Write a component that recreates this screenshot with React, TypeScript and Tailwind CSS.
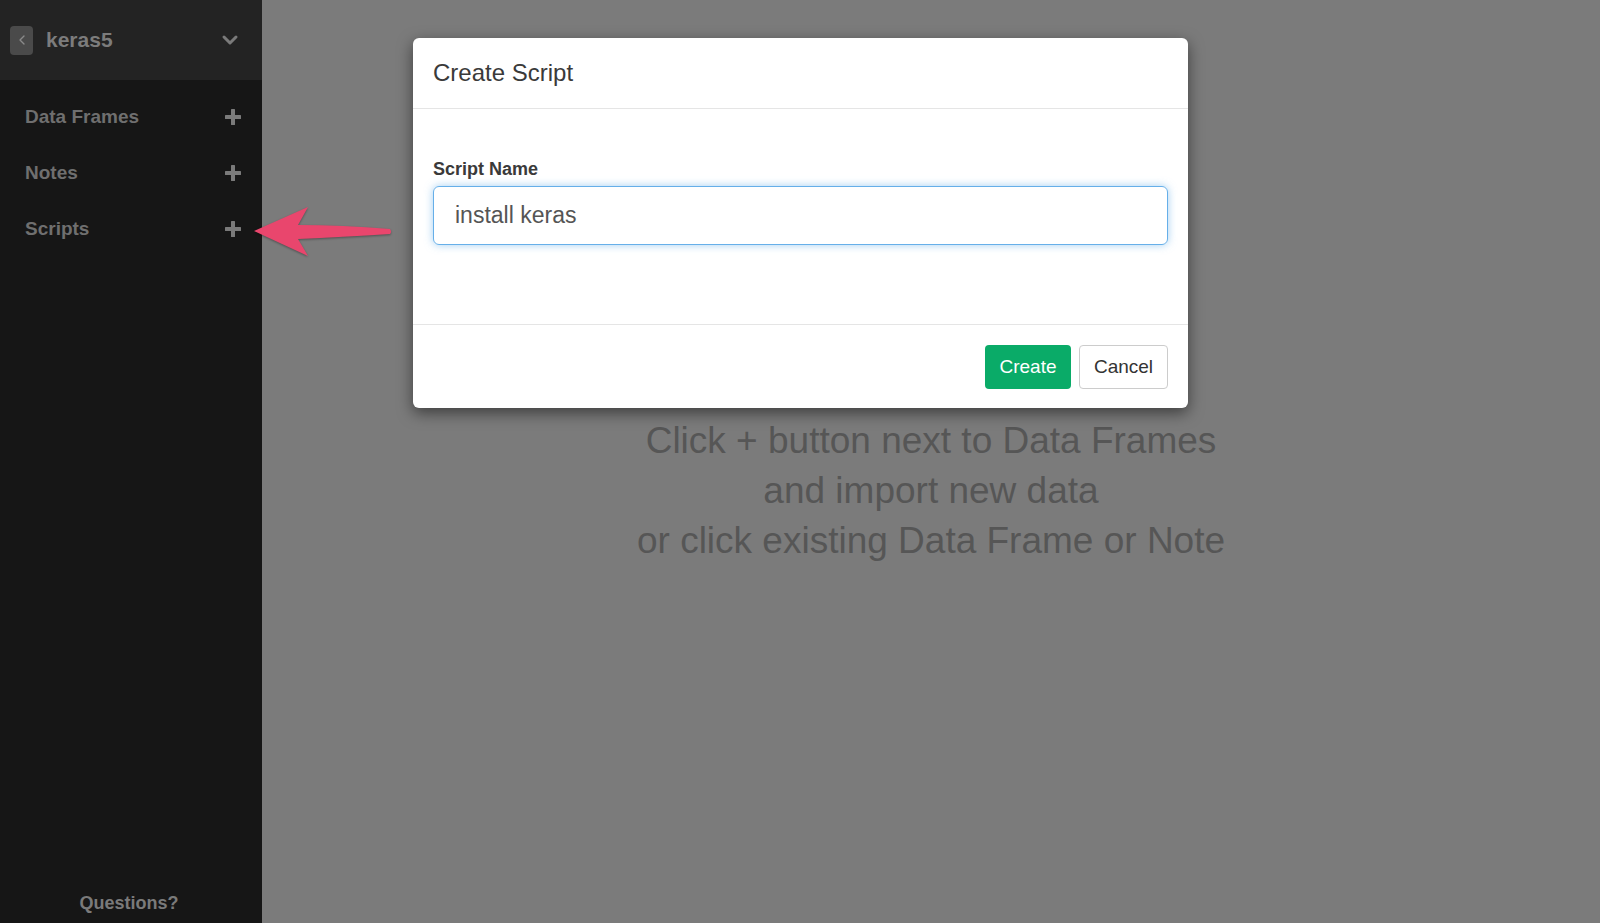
import { FiChevronLeft, FiChevronDown } from "react-icons/fi";

const sections = ["Data Frames", "Notes", "Scripts"];

function Plus() {
  return (
    <svg width="16" height="16" viewBox="0 0 16 16" className="text-[#7a7a7a]">
      <rect x="6" y="0" width="4" height="16" rx="0.5" fill="currentColor" />
      <rect x="0" y="6" width="16" height="4" rx="0.5" fill="currentColor" />
    </svg>
  );
}

function Arrow() {
  return (
    <svg width="145" height="60" viewBox="0 0 145 60" className="drop-shadow-[0_1px_1px_rgba(0,0,0,0.35)]">
      <path
        d="M2 32 L56 8 L46 26 Q90 26 138 30 Q140 33 138 35 Q90 38 46 40 L56 57 Z"
        fill="#e9466d"
      />
    </svg>
  );
}

export default function App() {
  return (
    <div
      className="relative flex w-[1600px] h-[923px] overflow-hidden"
      style={{ fontFamily: '"Liberation Sans", Arial, sans-serif' }}
    >
      <aside className="flex flex-col w-[262px] shrink-0 bg-[#161616]">
        <div className="flex items-center h-[80px] bg-[#232323] pl-[10px] pr-[20px]">
          <div className="flex items-center justify-center w-[23px] h-[29px] rounded-[4px] bg-[#4a4a4a] text-[#8a8a8a]">
            <FiChevronLeft size={16} />
          </div>
          <span className="ml-[13px] text-[21px] font-bold text-[#7c7c7c]">keras5</span>
          <FiChevronDown className="ml-auto text-[#7a7a7a]" size={24} strokeWidth={3} />
        </div>
        <nav className="flex flex-col pt-[9px]">
          {sections.map((s) => (
            <div key={s} className="flex items-center justify-between h-[56px] pl-[25px] pr-[21px]">
              <span className="text-[19px] font-bold text-[#6f6f6f]">{s}</span>
              <Plus />
            </div>
          ))}
        </nav>
        <div className="mt-auto pb-[6px] pr-[4px] text-center text-[18px] font-bold text-[#7a7a7a]">Questions?</div>
      </aside>

      <main className="flex-1 bg-[#7b7b7b] flex flex-col items-center pt-[416px]">
        <p className="text-center text-[37px] leading-[50px] text-[#565656]">
          Click + button next to Data Frames
          <br />
          and import new data
          <br />
          or click existing Data Frame or Note
        </p>
      </main>

      <div className="absolute left-[252px] top-[199px]">
        <Arrow />
      </div>

      <div className="absolute left-[413px] top-[38px] w-[775px] bg-white rounded-[6px] shadow-[0_5px_15px_rgba(0,0,0,0.5)]">
        <div className="h-[71px] flex items-center px-[20px] border-b border-[#e5e5e5]">
          <h2 className="text-[24px] text-[#3a3a3a]">Create Script</h2>
        </div>
        <div className="px-[20px] pt-[49px] pb-[79px]">
          <label className="block text-[18px] leading-[22px] font-bold text-[#3a3a3a] mb-[6px]">Script Name</label>
          <div className="flex items-center h-[59px] rounded-[6px] border border-[#66afe9] shadow-[0_0_8px_rgba(102,175,233,0.6)] px-[21px] text-[23px] text-[#555]">
            install keras
          </div>
        </div>
        <div className="flex justify-end gap-[8px] border-t border-[#e5e5e5] px-[20px] pt-[20px] pb-[19px]">
          <button className="h-[44px] w-[86px] rounded-[4px] bg-[#0aab68] text-white text-[19px]">Create</button>
          <button className="h-[44px] w-[89px] rounded-[4px] border border-[#ccc] bg-white text-[#333] text-[19px]">
            Cancel
          </button>
        </div>
      </div>
    </div>
  );
}
